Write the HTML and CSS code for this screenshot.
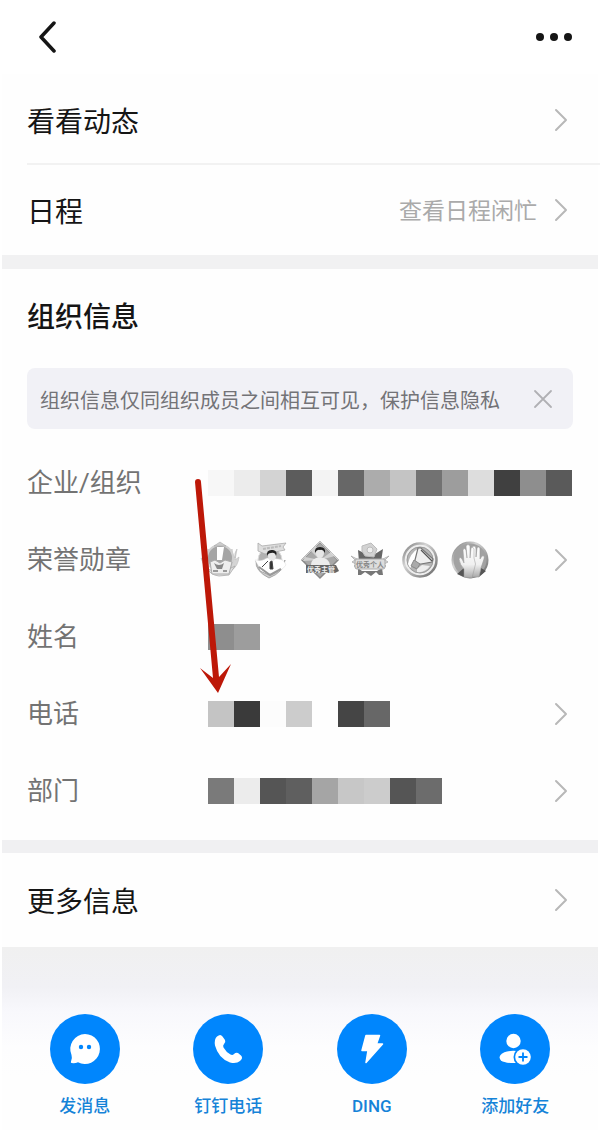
FILE: index.html
```
<!DOCTYPE html>
<html lang="zh-CN">
<head>
  <meta charset="UTF-8" />
  <meta name="viewport" content="width=device-width, initial-scale=1" />
  <title>个人资料</title>
  <link rel="stylesheet" href="styles.css">
</head>
<body>

  <svg class="defs" aria-hidden="true">
    <defs>
      <symbol id="chevron" viewBox="0 0 14 24">
        <path d="M2 2 L12 12 L2 22" fill="none" stroke="currentColor" stroke-width="2" stroke-linecap="round" stroke-linejoin="round"/>
      </symbol>
      <linearGradient id="metal" x1="0" y1="0" x2="1" y2="1">
        <stop offset="0" stop-color="#777"/>
        <stop offset="0.35" stop-color="#d4d4d4"/>
        <stop offset="0.6" stop-color="#aaa"/>
        <stop offset="1" stop-color="#666"/>
      </linearGradient>
      <linearGradient id="hand" x1="0" y1="0" x2="0" y2="1">
        <stop offset="0" stop-color="#fff"/>
        <stop offset="0.6" stop-color="#f0f0f0"/>
        <stop offset="1" stop-color="#aaa"/>
      </linearGradient>
    </defs>
  </svg>

  <div class="page">
    <header class="topbar">
      <button class="icon-btn" type="button" aria-label="返回">
        <svg width="20" height="34" viewBox="0 0 20 34"><path d="M18 3 L5 17 L18 31" fill="none" stroke="#151515" stroke-width="3.500" stroke-linecap="round" stroke-linejoin="round"/></svg>
      </button>
      <button class="icon-btn" type="button" aria-label="更多">
        <svg width="38" height="10" viewBox="0 0 38 10" fill="#151515"><circle cx="5" cy="5" r="4"/><circle cx="19" cy="5" r="4"/><circle cx="33" cy="5" r="4"/></svg>
      </button>
    </header>

    <main class="content">
      <nav class="links">
        <a class="row" href="#feed">
          <span class="row-title">看看动态</span>
          <svg class="chevron"><use href="#chevron"/></svg>
        </a>
        <a class="row row-line" href="#schedule">
          <span class="row-title">日程</span>
          <span class="row-hint">查看日程闲忙</span>
          <svg class="chevron"><use href="#chevron"/></svg>
        </a>
      </nav>

      <section class="org">
        <h2 class="org-title">组织信息</h2>
        <div class="notice">
          <p class="notice-text">组织信息仅同组织成员之间相互可见，保护信息隐私</p>
          <button class="icon-btn notice-close" type="button" aria-label="关闭">
            <svg width="20" height="20" viewBox="0 0 20 20"><path d="M2 2 L18 18 M18 2 L2 18" stroke="currentColor" stroke-width="1.800" stroke-linecap="round"/></svg>
          </button>
        </div>

        <div class="fields">
          <div class="field">
            <span class="field-label">企业/组织</span>
            <div class="mosaic">
              <i class="g-f7"></i><i class="g-ec"></i><i class="g-d3"></i><i class="g-5c"></i><i class="g-f3"></i><i class="g-67"></i><i class="g-ac"></i><i class="g-c4"></i><i class="g-72"></i><i class="g-9d"></i><i class="g-dd"></i><i class="g-40"></i><i class="g-8c"></i><i class="g-5a"></i>
            </div>
          </div>

          <a class="field" href="#medals">
            <span class="field-label">荣誉勋章</span>
            <span class="medals">
              <!-- 桂冠 -->
              <svg viewBox="0 0 40 40">
                <path d="M3 9 Q6 13 5 18 Q8 14 8 9 L11 15 L8 30 Q3 26 1 18 L5 20Z M37 9 Q34 13 35 18 Q32 14 32 9 L29 15 L32 30 Q38 26 39 17 L35 20Z" fill="#d5d5d5" stroke="#bbb" stroke-width=".6"/>
                <path d="M6 27 Q10 35 19 36 L29 35 L35 26 L29 29 L10 30Z" fill="#e2e2e2" stroke="#aaa" stroke-width=".8"/>
                <circle cx="20" cy="18" r="13" fill="#a5a5a5" stroke="#d0d0d0" stroke-width="2"/>
                <path d="M20 2 L26 6 L14 6Z" fill="#ccc" stroke="#aaa" stroke-width=".6"/>
                <path d="M17 7 L24 7 L22 20 L17 20Z" fill="#fff"/>
                <path d="M10 22 L15 20 L20 23 L25 20 L32 22 L29 34 L12 34Z" fill="#eee" stroke="#aaa"/>
                <path d="M14 23 Q19 27 24 23 L22 29 L17 29Z" fill="#888"/>
                <path d="M13 31 L18 31 M23 31 L27 31" stroke="#999" stroke-width="2"/>
              </svg>
              <!-- 飘带人物 -->
              <svg viewBox="0 0 40 40">
                <path d="M6 21 Q5 31 19 38 Q34 32 35 20 L30 31 L19 35 L10 31Z" fill="#ccc" stroke="#999" stroke-width=".8"/>
                <circle cx="20" cy="20" r="12" fill="#b2b2b2" stroke="#ddd"/>
                <path d="M8 3 L12 6 L36 3 L33 7 L35 10 L15 14 L8 11Z" fill="#dedede" stroke="#aaa" stroke-width=".8"/>
                <path d="M13 9 L31 6" stroke="#bbb" stroke-width="2" stroke-dasharray="3 1"/>
                <path d="M5 20 Q12 22 17 18 L28 19 Q34 19 36 25 Q30 33 20 34 Q11 32 5 20Z" fill="#fff" stroke="#ddd" stroke-width=".5"/>
                <ellipse cx="22" cy="16" rx="4" ry="5" fill="#e7e7e7"/>
                <path d="M17 16 Q16 9 23 10 Q28 11 26 16 Q25 12 21 13Q18 13 17 16Z" fill="#222"/>
                <path d="M12 27 L18 21 M20 22 L22 21 L23 29 L20 29Z" fill="#333" stroke="#444"/>
                <path d="M9 27 L20 35 L31 29" fill="none" stroke="#999" stroke-width="2"/>
              </svg>
              <!-- 菱形徽章 -->
              <svg viewBox="0 0 40 40">
                <path d="M20 2 L38 20 L20 38 L2 20Z" fill="#a8a8a8" stroke="#888" stroke-width="1.500"/>
                <path d="M20 20 L16 6 L11 11 L20 20 L5 17 L3 21 L20 20 L35 16 L31 12 L20 20 L25 7Z" fill="#d0d0d0"/>
                <path d="M20 2 L38 20 M20 2 L2 20" stroke="#ddd" stroke-width=".8"/>
                <path d="M11 25 Q11 18 20 17 Q29 18 30 25Z" fill="#ececec"/>
                <ellipse cx="20" cy="13" rx="4" ry="5" fill="#e6e6e6"/>
                <path d="M15 13 Q14 7 20 7 Q26 7 25 13 Q23 9 20 10 Q17 9 15 13Z" fill="#222"/>
                <path d="M6 25 L36 25 L39 31 L35 33 L6 33Z" fill="#666"/>
                <text x="7" y="32" class="medal-light">优秀主管</text>
              </svg>
              <!-- 优秀个人 -->
              <svg viewBox="0 0 40 40">
                <path d="M8 10 L16 14 L20 9 L25 14 L33 9 L31 22 L9 22Z" fill="#666"/>
                <path d="M1 16 L9 20 L8 29 L4 26 L6 24 L2 22 L5 20Z M39 16 L31 20 L32 29 L36 26 L34 24 L38 22 L35 20Z" fill="#ddd" stroke="#aaa" stroke-width=".8"/>
                <path d="M12 6 L21 3 L27 9 L24 17 L15 16 L12 11Z" fill="#d2d2d2" stroke="#bbb"/>
                <circle cx="20" cy="10" r="3" fill="#eee" stroke="#bbb"/>
                <path d="M8 28 L12 31 L27 31 L32 28 L33 35 L29 35 L26 32 L21 36 L15 32 L11 35 L8 35Z" fill="#777"/>
                <rect x="5" y="19" width="30" height="10" rx="2" fill="#ddd" stroke="#aaa"/>
                <text x="6" y="27" class="medal-dark">优秀个人</text>
              </svg>
              <!-- 喇叭 -->
              <svg viewBox="0 0 40 40">
                <circle cx="20" cy="20" r="16.500" fill="#eee" stroke="url(#metal)" stroke-width="2.500"/>
                <circle cx="20" cy="20" r="13" fill="#b5b5b5" stroke="#999"/>
                <path d="M8 24 Q10 13 19 8 L14 24 L10 28Z" fill="#fff"/>
                <path d="M18 8 L21 8 L33 19 L32 22 L21 24 L14 24Z" fill="#efefef" stroke="#777" stroke-width="1.200"/>
                <path d="M21 10 L32 21" stroke="#555" stroke-width="1.200"/>
                <path d="M14 20 L20 24 L17 29 L11 26Z" fill="#aaa" stroke="#888"/>
                <path d="M17 29 L22 25 L30 26 Q25 33 17 32Z" fill="#eee"/>
              </svg>
              <!-- 双手 -->
              <svg viewBox="0 0 40 40">
                <circle cx="20" cy="20" r="17.500" fill="#a2a2a2" stroke="url(#metal)" stroke-width="2"/>
                <path d="M7 34 L14 28 L14 37Z M31 28 L36 31 L29 37Z" fill="#555"/>
                <path d="M22 37 L22 9 Q22 6 24 6 Q26 6 26 9 L26 17 L27 8 Q28 6 30 8 L30 19 L32 16 Q35 15 34 19 L31 28 L29 37Z" fill="url(#hand)" stroke="#999" stroke-width=".6"/>
                <path d="M14 37 L14 29 Q10 25 9 19 Q10 16 12 19 L14 23 L13 10 Q14 7 16 10 L17 18 L16 6 Q18 3 20 6 L20 18 L21 8 Q23 6 24 9 L24 18 Q27 24 24 30 L22 38Z" fill="url(#hand)" stroke="#999" stroke-width=".5"/>
              </svg>
            </span>
            <svg class="chevron"><use href="#chevron"/></svg>
          </a>

          <div class="field">
            <span class="field-label">姓名</span>
            <div class="mosaic"><i class="g-8c"></i><i class="g-9d"></i></div>
          </div>

          <a class="field" href="#phone">
            <span class="field-label">电话</span>
            <span class="mosaic">
              <i class="g-c4"></i><i class="g-3a"></i><i class="g-fc"></i><i class="g-cc"></i><i></i><i class="g-45"></i><i class="g-67"></i>
            </span>
            <svg class="chevron"><use href="#chevron"/></svg>
          </a>

          <a class="field" href="#department">
            <span class="field-label">部门</span>
            <span class="mosaic">
              <i class="g-7a"></i><i class="g-ec"></i><i class="g-55"></i><i class="g-5f"></i><i class="g-a5"></i><i class="g-c7"></i><i class="g-cc"></i><i class="g-55"></i><i class="g-6c"></i>
            </span>
            <svg class="chevron"><use href="#chevron"/></svg>
          </a>

          <!-- 指向电话的箭头 -->
          <svg class="pointer" width="36" height="216" viewBox="0 0 36 216" fill="#bd1808" aria-hidden="true">
            <path d="M0 4 Q0 1 3 1 Q6 1 6 4 L24 199 L36 186 L23 215 L5 190 L18 200Z"/>
          </svg>
        </div>
      </section>

      <a class="row row-more" href="#more">
        <span class="row-title">更多信息</span>
        <svg class="chevron"><use href="#chevron"/></svg>
      </a>
    </main>

    <footer class="actions">
      <button class="action" type="button">
        <span class="action-icon">
          <svg viewBox="0 0 70 70">
            <path d="M35 20 A15 15 0 1 1 28 48.300 Q25 49.500 21.500 49 Q20.500 48.500 21 47.500 Q22.500 44 21.500 41 A15 15 0 0 1 35 20Z" fill="#fff"/>
            <circle cx="31" cy="33" r="2.200" fill="#0086fd"/><circle cx="39" cy="33" r="2.200" fill="#0086fd"/>
          </svg>
        </span>
        发消息
      </button>
      <button class="action" type="button">
        <span class="action-icon">
          <svg viewBox="0 0 70 70">
            <path d="M24 22.500 Q27.500 19.500 29.500 22.500 L32 26 Q33 28 31 30 Q29.500 31.500 30.500 33.500 Q33 38 37.500 40.500 Q39.500 41.500 41 40 Q43 38 45 39 L48 41.500 Q50.500 44 47 47 Q43.500 50 37 48.500 Q25.500 44.500 22 31.500 Q21 25 24 22.500Z" fill="#fff"/>
          </svg>
        </span>
        钉钉电话
      </button>
      <button class="action" type="button">
        <span class="action-icon">
          <svg viewBox="0 0 70 70">
            <path d="M29 21.500 H42.500 L39.500 30 H45.500 L29 48.500 L31 36.500 H25Z" fill="#fff" stroke="#fff" stroke-width="1.500" stroke-linejoin="round"/>
          </svg>
        </span>
        DING
      </button>
      <button class="action" type="button">
        <span class="action-icon">
          <svg viewBox="0 0 70 70">
            <circle cx="33.500" cy="27" r="7.200" fill="#fff"/>
            <path d="M37 37 Q25 36 20.500 41 Q18.500 44 21 46.500 Q25 49.500 37 49Z" fill="#fff"/>
            <circle cx="43" cy="43" r="9.500" fill="#0086fd"/>
            <circle cx="43" cy="43" r="7.800" fill="#fff"/>
            <path d="M38.500 43 H47.500 M43 38.500 V47.500" stroke="#0086fd" stroke-width="1.800"/>
          </svg>
        </span>
        添加好友
      </button>
    </footer>
  </div>

</body>
</html>
```
FILE: styles.css
```
* {
  margin: 0;
  padding: 0;
  box-sizing: border-box;
}
body {
  background-color: #fff;
  font-family: Roboto, "Noto Sans CJK SC", sans-serif;
  color: #151515;
}
a {
  color: inherit;
  text-decoration: none;
}
.defs {
  position: absolute;
  width: 0;
  height: 0;
}
.page {
  min-height: 100vh;
  display: flex;
  flex-direction: column;
  margin: 0 2px;
}
.topbar {
  display: flex;
  align-items: center;
  justify-content: space-between;
  height: 74px;
  padding: 0 25px 0 34px;
}
.icon-btn {
  display: flex;
  border: none;
  background: none;
  cursor: pointer;
}
.content {
  background-color: #fefefe;
}
.row {
  display: flex;
  align-items: center;
  height: 92px;
  margin-left: 25px;
  padding-right: 30px;
  font-size: 28px;
  line-height: 40px;
}
.row-title {
  flex: 1;
  padding-top: 5px;
}
.row-line {
  border-top: 2px solid #f2f2f2;
  margin-top: -3px;
  margin-right: -2px;
  padding-right: 32px;
}
.row-hint {
  margin-right: 17px;
  padding-top: 4px;
  font-size: 23px;
  color: #aaa;
}
.chevron {
  flex: none;
  width: 14px;
  height: 24px;
  color: #b8b8b8;
}

/* 组织信息 */
.org {
  border-top: 14px solid #f1f1f2;
  border-bottom: 13px solid #f0f0f2;
  padding: 29px 25px 11px;
}
.org-title {
  font-size: 28px;
  font-weight: 500;
  line-height: 40px;
}
.notice {
  display: flex;
  align-items: center;
  justify-content: space-between;
  margin-top: 30px;
  padding: 12px 20px 12px 13px;
  border-radius: 8px;
  background-color: #f1f1f6;
}
.notice-text {
  padding-top: 5px;
  font-size: 20px;
  line-height: 32px;
  color: #737377;
}
.notice-close {
  color: #b0b0b4;
}
.fields {
  position: relative;
  margin-top: 15px;
}
.field {
  display: flex;
  align-items: center;
  height: 77px;
  padding-right: 5px;
}
.field-label {
  flex: none;
  width: 173px;
  font-size: 26px;
  line-height: 40px;
  color: #737373;
}
.field .chevron {
  margin-left: auto;
}
.mosaic {
  display: flex;
  flex: none;
  margin-left: 8px;
}
.mosaic i {
  width: 26px;
  height: 26px;
}
.medals {
  display: flex;
  gap: 10px;
}
.medals svg {
  width: 40px;
  height: 40px;
}
.medal-light,
.medal-dark {
  font-size: 7px;
  font-weight: 700;
  fill: #eee;
}
.medal-dark {
  fill: #888;
}
.pointer {
  position: absolute;
  top: 34px;
  left: 168px;
}

/* 马赛克灰度 */
.g-3a { background-color: #3a3a3a; }
.g-40 { background-color: #404040; }
.g-45 { background-color: #454545; }
.g-55 { background-color: #555; }
.g-5a { background-color: #5a5a5a; }
.g-5c { background-color: #5c5c5c; }
.g-5f { background-color: #5f5f5f; }
.g-67 { background-color: #676767; }
.g-6c { background-color: #6c6c6c; }
.g-72 { background-color: #727272; }
.g-7a { background-color: #7a7a7a; }
.g-8c { background-color: #8e8e8e; }
.g-9d { background-color: #9d9d9d; }
.g-a5 { background-color: #a5a5a5; }
.g-ac { background-color: #acacac; }
.g-c4 { background-color: #c4c4c4; }
.g-c7 { background-color: #c7c7c7; }
.g-cc { background-color: #ccc; }
.g-d3 { background-color: #d3d3d3; }
.g-dd { background-color: #ddd; }
.g-ec { background-color: #ececec; }
.g-f3 { background-color: #f3f3f3; }
.g-f7 { background-color: #f7f7f7; }
.g-fc { background-color: #fcfcfc; }

.row-more {
  height: 94px;
}

/* 底部操作 */
.actions {
  flex: 1;
  display: grid;
  grid-template-columns: repeat(4, 1fr);
  align-items: start;
  padding: 67px 11px 10px;
  background: linear-gradient(#f0f0f0 0, #f1f1f5 40px, #f8f8fc 64px, #fdfdfe 100px, #fefefe 130px);
}
.action {
  display: flex;
  flex-direction: column;
  align-items: center;
  gap: 10px;
  border: none;
  background: none;
  font-family: inherit;
  font-size: 17px;
  font-weight: 500;
  line-height: 24px;
  color: #1583d8;
  cursor: pointer;
}
.action-icon {
  width: 70px;
  height: 70px;
  border-radius: 50%;
  background-color: #0086fd;
}
```
